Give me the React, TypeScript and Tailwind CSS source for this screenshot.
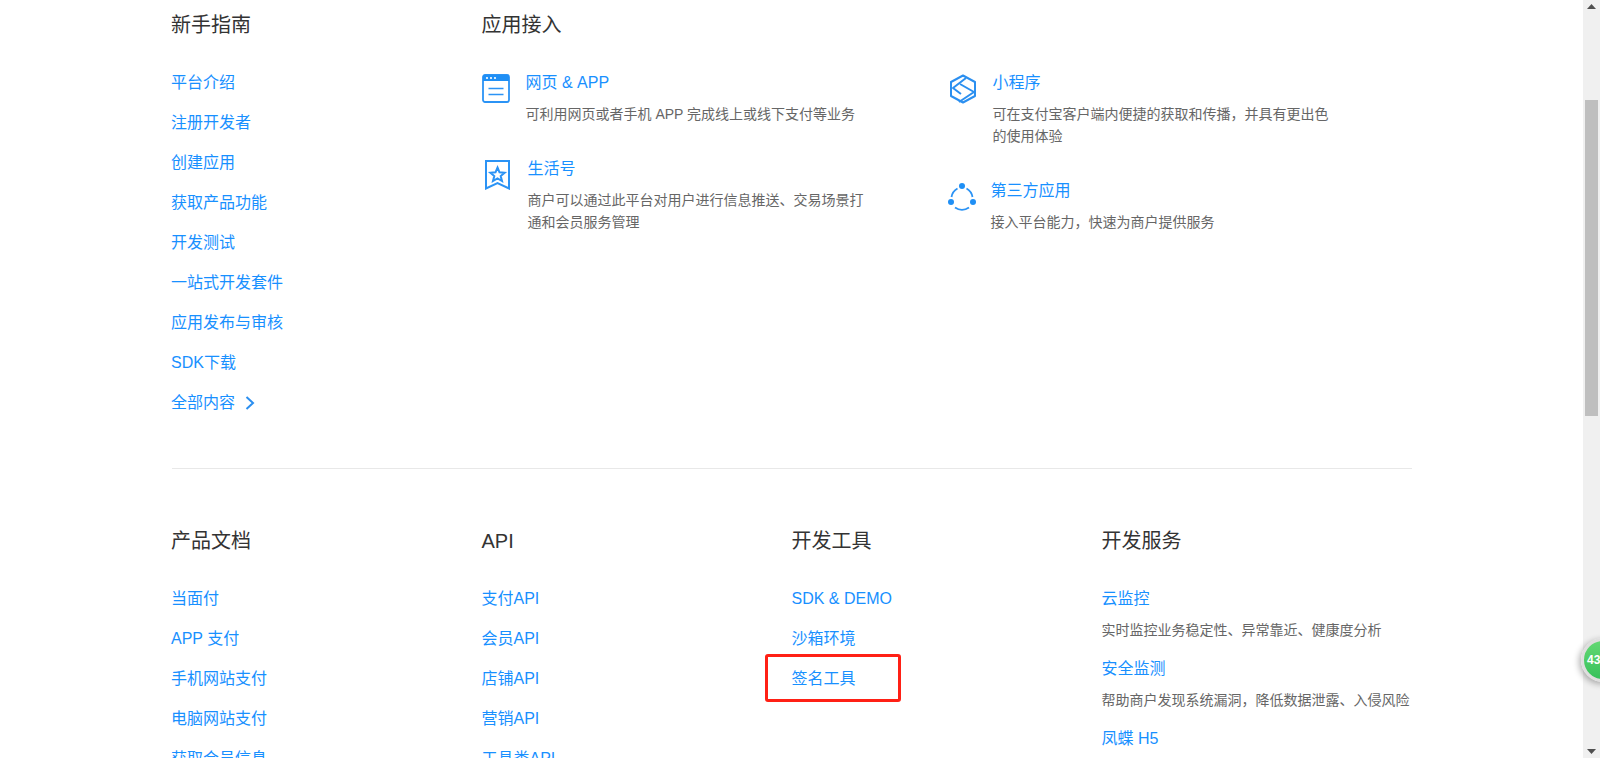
const cjk = "font-['Arial','Liberation_Sans','Noto_Sans_CJK_SC',sans-serif]";

const guide = ["平台介绍", "注册开发者", "创建应用", "获取产品功能", "开发测试", "一站式开发套件", "应用发布与审核", "SDK下载"];
const products = ["当面付", "APP 支付", "手机网站支付", "电脑网站支付", "获取会员信息"];
const apis = ["支付API", "会员API", "店铺API", "营销API", "工具类API"];

function WindowIcon() {
  return (
    <svg viewBox="0 0 28 29" className="w-7 h-[29px] shrink-0 mt-[11px]" fill="none">
      <rect x="1" y="1" width="26" height="27" rx="2" stroke="#2b93f5" strokeWidth="1.8" />
      <path d="M1 3a2 2 0 0 1 2-2h22a2 2 0 0 1 2 2v4H1z" fill="#1f8ff5" />
      <circle cx="5" cy="4" r="1.100" fill="#fff" />
      <circle cx="9" cy="4" r="1.100" fill="#fff" />
      <circle cx="13" cy="4" r="1.100" fill="#fff" />
      <path d="M6.500 14.500h15M6.500 20.500h15" stroke="#2b93f5" strokeWidth="1.600" />
    </svg>
  );
}

function BookmarkIcon() {
  return (
    <svg viewBox="0 0 25 30" className="w-[25px] h-[30px] shrink-0 mt-[11px] ml-[3px]" fill="none" stroke="#2b93f5" strokeWidth="2">
      <path d="M1 1h23v27.500l-11.500-5.500L1 28.500z" />
      <path d="M12.500 7.500l2 4.800 5.100.4-3.900 3.300 1.300 5-4.500-2.700-4.500 2.700 1.300-5-3.900-3.300 5.100-.4z" />
    </svg>
  );
}

function HexIcon() {
  return (
    <svg viewBox="0 0 28 30" className="w-7 h-[30px] shrink-0 mt-[11px] ml-px" fill="none" stroke="#2b8ff0" strokeWidth="2" strokeLinejoin="round">
      <path d="M14 1.500l12 6.500v14l-12 6.500L2 22V8z" />
      <path d="M17 4L4 14l8 6" />
      <path d="M11 10l14 8-15 10" />
    </svg>
  );
}

function OrbitIcon() {
  return (
    <svg viewBox="0 0 28 28" className="w-7 h-7 shrink-0 mt-3" fill="none" stroke="#2b93f5" strokeWidth="1.800">
      <path d="M9.500 5.500A12 12 0 0 0 3.500 14M18.500 5.500A12 12 0 0 1 24.500 14M7 24.500a12 12 0 0 0 14 0" />
      <circle cx="14" cy="3" r="3" fill="#1f8ff5" stroke="none" />
      <circle cx="3" cy="19" r="3" fill="#1f8ff5" stroke="none" />
      <circle cx="25" cy="19" r="3" fill="#1f8ff5" stroke="none" />
    </svg>
  );
}

function LinkRow({ text }: { text: string }) {
  return <div className="h-10 flex items-center text-base text-[#1890ff] whitespace-nowrap">{text}</div>;
}

function Heading({ text }: { text: string }) {
  return <h3 className="h-[49px] flex items-center text-xl text-[#333] font-normal mb-[14px]">{text}</h3>;
}

function Scrollbar() {
  return (
    <div className="w-[17px] shrink-0 h-full bg-[#f0f0f0] flex flex-col items-center">
      <svg viewBox="0 0 9 5" className="w-[9px] h-[5px] mt-1 shrink-0"><path d="M4.500 0L9 5H0z" fill="#505050" /></svg>
      <div className="w-[13px] h-[316px] bg-[#bfbfbf] mt-[91px]" />
      <svg viewBox="0 0 9 5" className="w-[9px] h-[5px] mt-auto mb-1 shrink-0"><path d="M0 0h9L4.500 5z" fill="#505050" /></svg>
    </div>
  );
}

export default function App() {
  return (
    <div className={`relative h-screen overflow-hidden bg-white flex ${cjk}`}>
      <div className="flex-1 min-w-0 pl-[171px]">
        <div className="w-[1241px] h-[468px] flex">
          <div className="w-[310.5px] shrink-0">
            <Heading text="新手指南" />
            {guide.map((t) => <LinkRow key={t} text={t} />)}
            <div className="h-10 flex items-center text-base text-[#1890ff]">
              全部内容
              <svg viewBox="0 0 10 14" className="w-2.5 h-3.5 ml-2.5" fill="none" stroke="#2b8ff0" strokeWidth="2"><path d="M1.500 1l6.500 6-6.500 6" /></svg>
            </div>
          </div>
          <div className="flex-1">
            <Heading text="应用接入" />
            <div className="flex">
              <div className="w-[466px]">
                <div className="flex gap-4 mb-6">
                  <WindowIcon />
                  <div>
                    <LinkRow text="网页 & APP" />
                    <p className="text-sm leading-[22px] text-[#666]">可利用网页或者手机 APP 完成线上或线下支付等业务</p>
                  </div>
                </div>
                <div className="flex gap-[18px]">
                  <BookmarkIcon />
                  <div className="w-[340px]">
                    <LinkRow text="生活号" />
                    <p className="text-sm leading-[22px] text-[#666]">商户可以通过此平台对用户进行信息推送、交易场景打通和会员服务管理</p>
                  </div>
                </div>
              </div>
              <div className="flex-1">
                <div className="flex gap-4 mb-6">
                  <HexIcon />
                  <div className="w-[340px]">
                    <LinkRow text="小程序" />
                    <p className="text-sm leading-[22px] text-[#666]">可在支付宝客户端内便捷的获取和传播，并具有更出色的使用体验</p>
                  </div>
                </div>
                <div className="flex gap-[15px]">
                  <OrbitIcon />
                  <div>
                    <LinkRow text="第三方应用" />
                    <p className="text-sm leading-[22px] text-[#666]">接入平台能力，快速为商户提供服务</p>
                  </div>
                </div>
              </div>
            </div>
          </div>
        </div>

        <div className="ml-px w-[1240px] h-px bg-[#e8e8e8]" />

        <div className="w-[1241px] mt-[47px] grid grid-cols-[310.5px_310px_310px_1fr]">
          <div>
            <Heading text="产品文档" />
            {products.map((t) => <LinkRow key={t} text={t} />)}
          </div>
          <div>
            <Heading text="API" />
            {apis.map((t) => <LinkRow key={t} text={t} />)}
          </div>
          <div>
            <Heading text="开发工具" />
            <LinkRow text="SDK & DEMO" />
            <LinkRow text="沙箱环境" />
            <div className="relative">
              <LinkRow text="签名工具" />
              <div className="absolute -left-[27px] -top-[5px] w-[136px] h-12 border-[3px] border-[#ff2015] rounded-[3px]" />
            </div>
          </div>
          <div>
            <Heading text="开发服务" />
            <LinkRow text="云监控" />
            <p className="mb-2 text-sm leading-[22px] text-[#666] whitespace-nowrap">实时监控业务稳定性、异常靠近、健康度分析</p>
            <LinkRow text="安全监测" />
            <p className="mb-2 text-sm leading-[22px] text-[#666] whitespace-nowrap">帮助商户发现系统漏洞，降低数据泄露、入侵风险</p>
            <LinkRow text="凤蝶 H5" />
          </div>
        </div>
      </div>
      <Scrollbar />
      <div className="absolute left-[1581px] top-[638px] w-11 h-11 rounded-full border-[3px] border-[#dedede] bg-linear-to-b from-[#62d873] to-[#35c15a] shadow-[-2px_2px_6px_rgba(0,0,0,0.3)] flex items-center pl-[3px] text-xs font-bold text-white">
        43
      </div>
    </div>
  );
}
